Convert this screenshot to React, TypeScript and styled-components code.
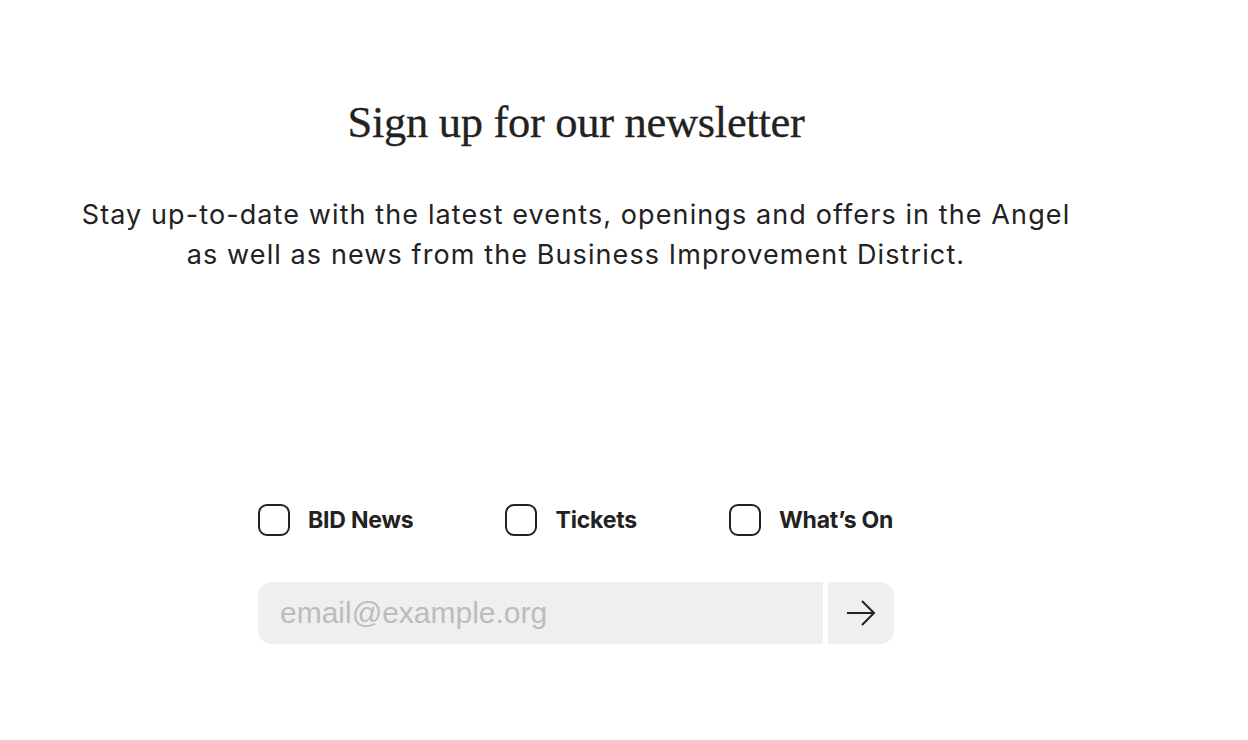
import React from "react";
import styled, { createGlobalStyle } from "styled-components";

const Global = createGlobalStyle`
  body {
    margin: 0;
    background: #fff;
    color: #222;
    font-family: "Inter", "Liberation Sans", sans-serif;
  }
`;

const Section = styled.section`
  width: 1152px;
  display: flex;
  flex-direction: column;
  align-items: center;
  padding-top: 94px;
`;

const Title = styled.h2`
  margin: 0;
  font-family: "Liberation Serif", "DejaVu Serif", serif;
  font-weight: 400;
  font-size: 44.5px;
  line-height: 56px;
  letter-spacing: -0.3px;
  color: #222;
  -webkit-text-stroke: 0.3px #222;
`;

const Lead = styled.p`
  margin: 45px 0 0;
  font-size: 27px;
  line-height: 40px;
  letter-spacing: 1.1px;
  text-align: center;
  color: #222;
`;

const Form = styled.form`
  margin-top: 229px;
  width: 636px;
  display: flex;
  flex-direction: column;
  gap: 46px;
`;

const Topics = styled.div`
  display: flex;
  gap: 92px;
`;

const Topic = styled.label`
  flex: none;
  display: flex;
  align-items: center;
  gap: 18px;
  font-size: 23px;
  font-weight: 650;
  letter-spacing: -0.2px;
  white-space: nowrap;
  color: #222;
  cursor: pointer;
`;

const Box = styled.input.attrs({ type: "checkbox" })`
  appearance: none;
  flex: none;
  margin: 0;
  width: 32px;
  height: 32px;
  border: 2px solid #222;
  border-radius: 9px;
  background: #fff;
`;

const Field = styled.div`
  display: flex;
  gap: 5px;
  height: 62px;
`;

const Email = styled.input`
  flex: 1;
  border: 0;
  outline: none;
  background: #efefef;
  border-radius: 14px 0 0 14px;
  padding: 0 22px;
  font-family: "Liberation Sans", "Inter", sans-serif;
  font-size: 30px;
  color: #222;
  &::placeholder {
    color: #bcbcbc;
  }
`;

const Submit = styled.button`
  width: 66px;
  border: 0;
  background: #efefef;
  border-radius: 0 14px 14px 0;
  display: flex;
  align-items: center;
  justify-content: center;
  padding: 0;
  cursor: pointer;
`;

const topics = ["BID News", "Tickets", "What’s On"];

export default function App() {
  return (
    <>
      <Global />
      <Section>
        <Title>Sign up for our newsletter</Title>
        <Lead>
          Stay up-to-date with the latest events, openings and offers in the Angel
          <br />
          as well as news from the Business Improvement District.
        </Lead>
        <Form onSubmit={(e) => e.preventDefault()}>
          <Topics>
            {topics.map((t) => (
              <Topic key={t}>
                <Box />
                {t}
              </Topic>
            ))}
          </Topics>
          <Field>
            <Email type="email" placeholder="email@example.org" />
            <Submit type="submit" aria-label="Subscribe">
              <svg width="32" height="30" viewBox="0 0 32 30" fill="none" stroke="#222" strokeWidth="2">
                <path d="M2 15h27" />
                <path d="M17 3l12 12-12 12" />
              </svg>
            </Submit>
          </Field>
        </Form>
      </Section>
    </>
  );
}
